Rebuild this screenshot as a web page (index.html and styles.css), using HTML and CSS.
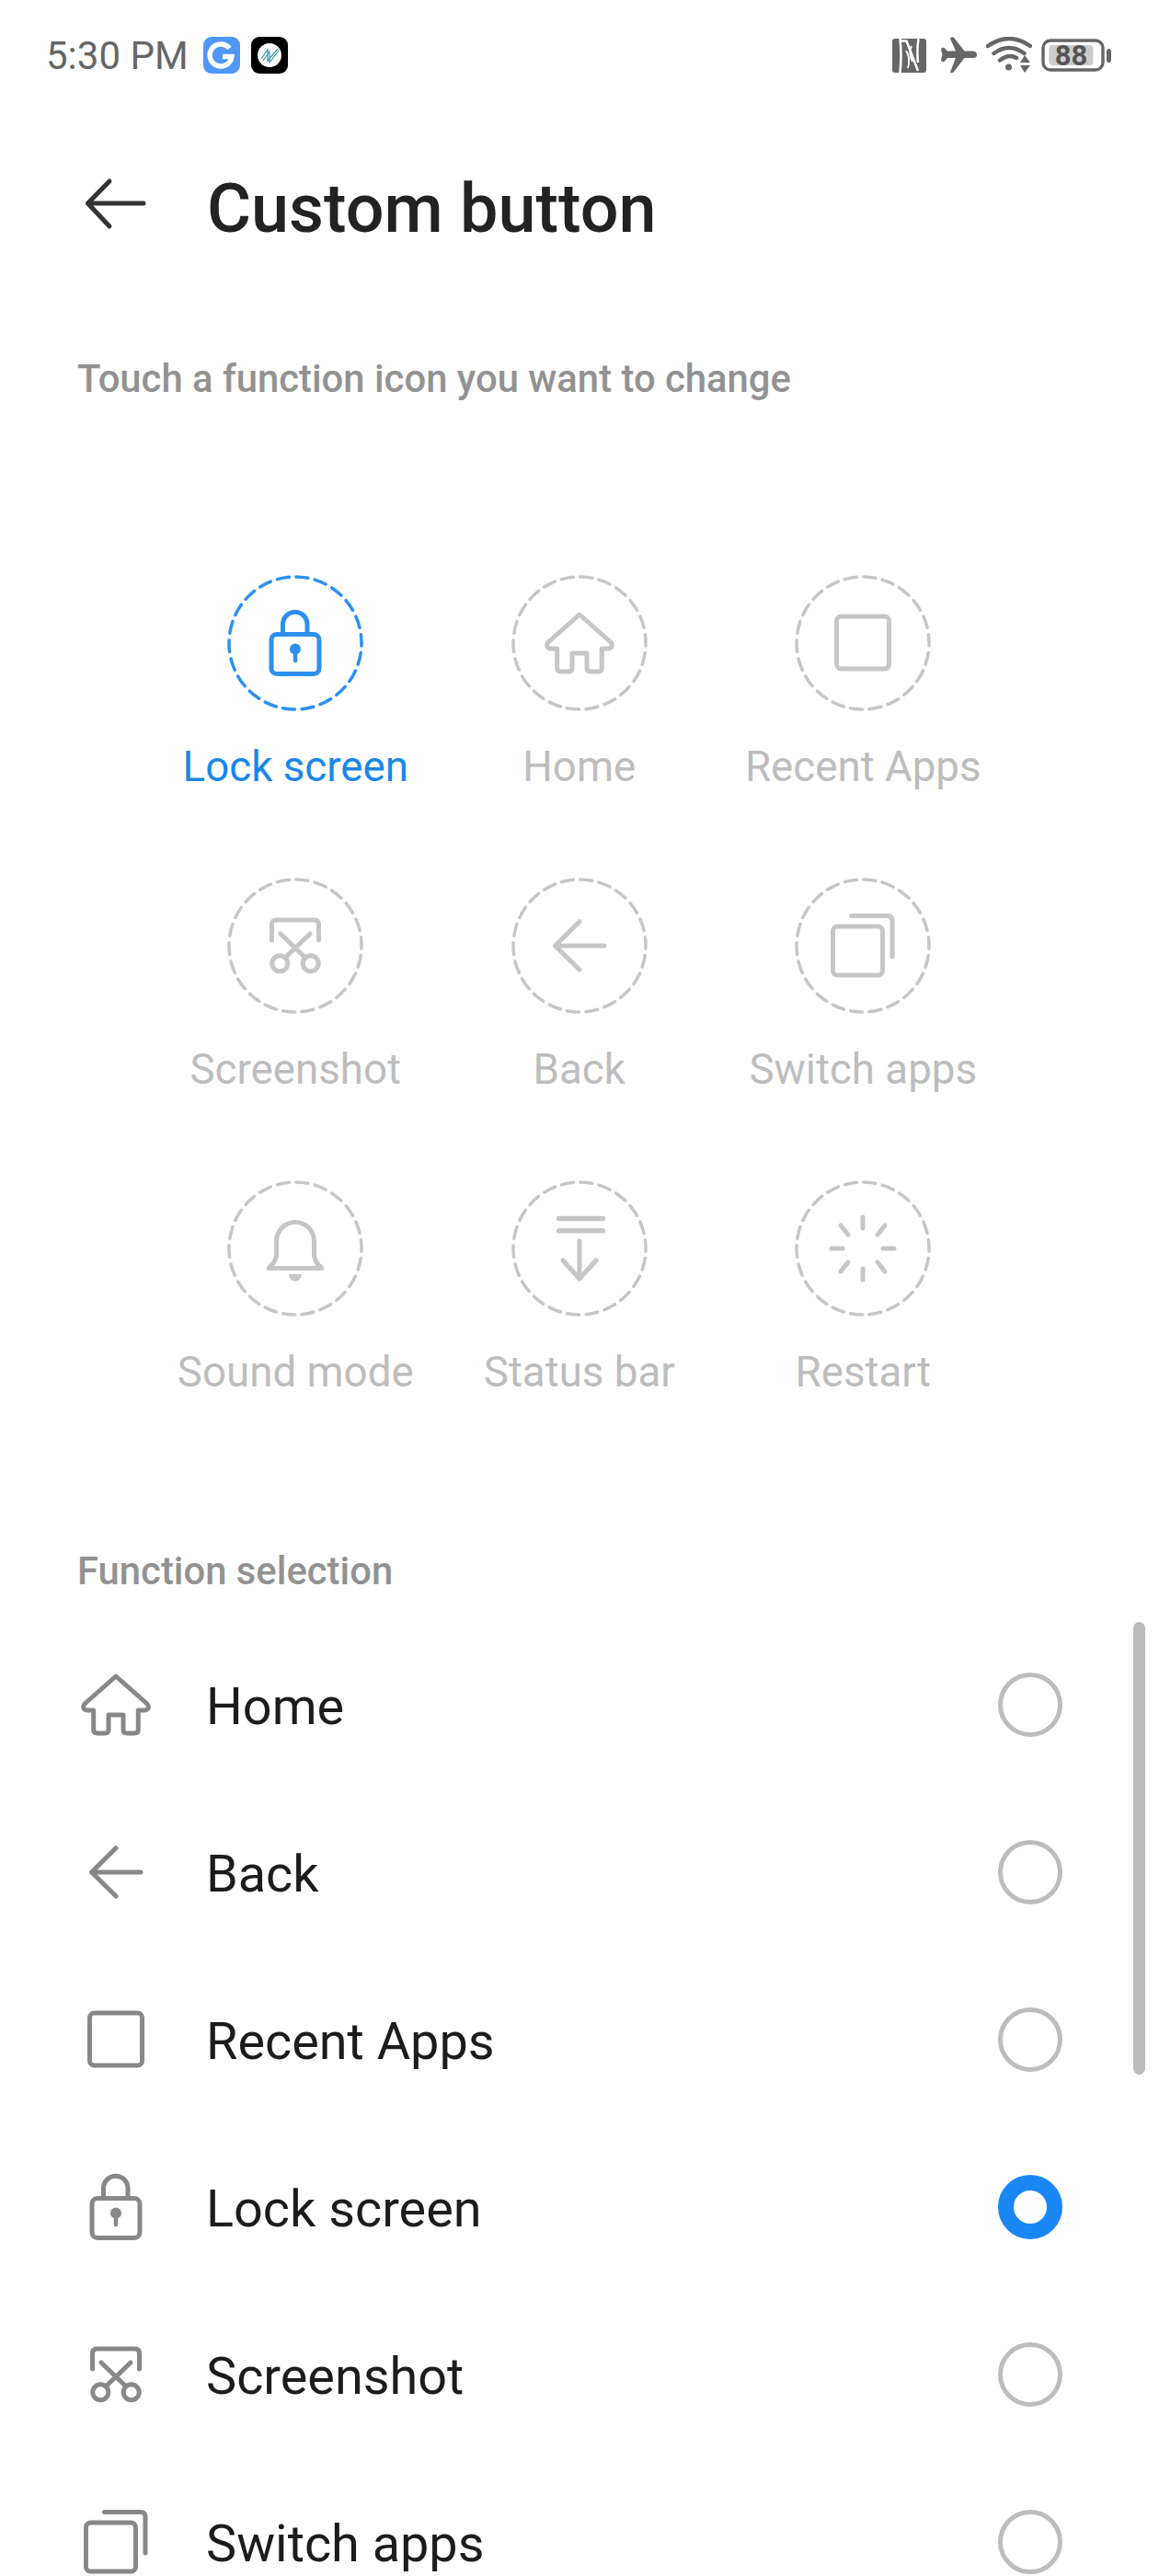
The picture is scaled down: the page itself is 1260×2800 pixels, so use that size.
FILE: index.html
```html
<!DOCTYPE html>
<html lang="en">
<head>
<meta charset="utf-8">
<title>Custom button</title>
<link rel="stylesheet" href="styles.css">
</head>
<body>
<svg class="defs" width="0" height="0" aria-hidden="true">
  <defs>
    <g id="i-home" class="line"><path d="M42 11 L8 41 Q4.500 46 10 48 H17.700 V69 Q17.700 73 22 73 H30 Q34 73 34 69 V53 H50 V69 Q50 73 54 73 H62 Q66.300 73 66.300 69 V48 H74 Q79.500 46 76 41 Z"/></g>
    <g id="i-back" class="line"><path d="M69 42 H15.500 M42 15.700 L15.500 42 L42 68"/></g>
    <g id="i-recent" class="line"><rect x="13.500" y="13" width="57" height="57" rx="5"/></g>
    <g id="i-lock" class="line"><rect x="16" y="32.500" width="52" height="43" rx="6"/><path d="M28.500 32 V21.500 A13.250 13.250 0 0 1 55 21.500 V32"/><circle class="solid nostroke" cx="42" cy="48.500" r="6"/><path class="slim" d="M42 50 V61"/></g>
    <g id="i-shot" class="line"><path d="M16.500 36 V19 Q16.500 14 21.500 14 H62.500 Q67.500 14 67.500 19 V36"/><path d="M26 29 L53 55 M58 29 L31 55"/><circle cx="25.300" cy="61.300" r="8.500"/><circle cx="58.700" cy="61.300" r="8.500"/></g>
    <g id="i-switch" class="line"><rect x="9.500" y="21" width="54" height="53" rx="5"/><path d="M29.500 9.500 H69 Q74 9.500 74 14.500 V54"/></g>
    <g id="i-bell" class="line"><path d="M13 63.500 H71 Q64 58 62.500 50 V34 A20.500 20.500 0 0 0 21.500 34 V50 Q20 58 13 63.500 Z"/><path class="solid nostroke" d="M35 70 H49 A7 7.500 0 0 1 35 70 Z"/></g>
    <g id="i-status" class="line"><path class="thick" d="M19.500 9.500 H67.500 M19.500 22.700 H67.500"/><path d="M42 34 V74 M24 55 L42 75 L60 55"/></g>
    <g id="i-restart" class="line"><path d="M42 8 V20 M42 64 V76 M8 42 H20 M64 42 H76 M18 17 L26 27 M66 17 L58 27 M18 67 L26 57 M66 67 L58 57"/></g>
  </defs>
</svg>

<div class="phone">
  <header class="status">
    <div class="status-left">
      <span class="time">5:30 PM</span>
      <svg class="app" viewBox="0 0 40 40"><rect class="g-bg" width="40" height="40" rx="9"/><path class="g-mark" d="M28.500 12.500 A12 12 0 1 0 31 21.500 H21"/></svg>
      <svg class="app" viewBox="0 0 40 40"><rect class="k-bg" width="40" height="40" rx="9"/><circle class="k-dot" cx="20" cy="20" r="13"/><path class="k-mark" d="M11 24 L18 14 L18 26 L29 13 M13 26 L20 16 L20 28 L30 15"/></svg>
    </div>
    <div class="status-right">
      <svg class="nfc" viewBox="0 0 37 37"><rect class="st" width="37" height="37" rx="3"/><path class="st-cut" d="M8.500 0 Q10.500 18 8.500 37 M10 2.500 H15.500 L28 35 M28.500 0 Q26.500 14 28 26"/><path class="st-cut-thin" d="M15 13 Q20 21 17 32 M21 8 Q17 16 22 25"/></svg>
      <svg class="plane" viewBox="0 0 40 40"><path class="st" d="M12 0.500 Q14 -0.500 15.500 1.500 L26.500 15.500 H36 Q40 16 40 19.500 Q40 23 36 23 H26.500 L15 38 Q13 40 11 38.500 L17 23 H8 L4.500 27 Q1.500 28 1 25 L2.500 19.500 L1 14 Q1.500 11 4.500 12 L8 15.500 H17 L11 2 Z"/></svg>
      <svg class="wifi" viewBox="0 0 50 40"><path class="wf" d="M2 10 Q25 -6 48 10 M8.500 18 Q25 6 41.500 18 M15 25.500 Q25 18 33 23"/><circle class="st" cx="24.500" cy="33" r="3.500"/><path class="st" d="M37 28 L42 20 L48 28 Z M37 31 H48 L42 39 Z"/></svg>
      <svg class="batt" viewBox="0 0 76 36"><rect class="batt-body" x="2" y="2" width="65" height="32" rx="8"/><rect class="batt-fill" x="8.500" y="7" width="48" height="22" rx="4"/><rect class="st" x="71" y="11" width="5" height="15" rx="2.500"/><text class="batt-text" x="32.500" y="29">88</text></svg>
    </div>
  </header>

  <div class="topbar">
    <svg class="icon title-back" viewBox="0 0 84 84"><path class="title-arrow" d="M72 38 H11.500 M35 14 L11.500 38 L35 63"/></svg>
    <h1 class="title">Custom button</h1>
  </div>

  <p class="caption caption-top">Touch a function icon you want to change</p>

  <section class="grid">
    <div class="cell active"><div class="ring"><svg class="dash" viewBox="0 0 148 148"><circle cx="74" cy="74" r="72"/></svg><svg class="icon" viewBox="0 0 84 84"><use href="#i-lock"/></svg></div><span class="cell-label">Lock screen</span></div>
    <div class="cell"><div class="ring"><svg class="dash" viewBox="0 0 148 148"><circle cx="74" cy="74" r="72"/></svg><svg class="icon" viewBox="0 0 84 84"><use href="#i-home"/></svg></div><span class="cell-label">Home</span></div>
    <div class="cell"><div class="ring"><svg class="dash" viewBox="0 0 148 148"><circle cx="74" cy="74" r="72"/></svg><svg class="icon" viewBox="0 0 84 84"><use href="#i-recent"/></svg></div><span class="cell-label">Recent Apps</span></div>
    <div class="cell"><div class="ring"><svg class="dash" viewBox="0 0 148 148"><circle cx="74" cy="74" r="72"/></svg><svg class="icon" viewBox="0 0 84 84"><use href="#i-shot"/></svg></div><span class="cell-label">Screenshot</span></div>
    <div class="cell"><div class="ring"><svg class="dash" viewBox="0 0 148 148"><circle cx="74" cy="74" r="72"/></svg><svg class="icon" viewBox="0 0 84 84"><use href="#i-back"/></svg></div><span class="cell-label">Back</span></div>
    <div class="cell"><div class="ring"><svg class="dash" viewBox="0 0 148 148"><circle cx="74" cy="74" r="72"/></svg><svg class="icon" viewBox="0 0 84 84"><use href="#i-switch"/></svg></div><span class="cell-label">Switch apps</span></div>
    <div class="cell"><div class="ring"><svg class="dash" viewBox="0 0 148 148"><circle cx="74" cy="74" r="72"/></svg><svg class="icon" viewBox="0 0 84 84"><use href="#i-bell"/></svg></div><span class="cell-label">Sound mode</span></div>
    <div class="cell"><div class="ring"><svg class="dash" viewBox="0 0 148 148"><circle cx="74" cy="74" r="72"/></svg><svg class="icon" viewBox="0 0 84 84"><use href="#i-status"/></svg></div><span class="cell-label">Status bar</span></div>
    <div class="cell"><div class="ring"><svg class="dash" viewBox="0 0 148 148"><circle cx="74" cy="74" r="72"/></svg><svg class="icon" viewBox="0 0 84 84"><use href="#i-restart"/></svg></div><span class="cell-label">Restart</span></div>
  </section>

  <p class="caption caption-section">Function selection</p>

  <section class="list">
    <div class="row"><svg class="icon" viewBox="0 0 84 84"><use href="#i-home"/></svg><span class="row-label">Home</span><span class="radio"></span></div>
    <div class="row"><svg class="icon" viewBox="0 0 84 84"><use href="#i-back"/></svg><span class="row-label">Back</span><span class="radio"></span></div>
    <div class="row"><svg class="icon" viewBox="0 0 84 84"><use href="#i-recent"/></svg><span class="row-label">Recent Apps</span><span class="radio"></span></div>
    <div class="row"><svg class="icon" viewBox="0 0 84 84"><use href="#i-lock"/></svg><span class="row-label">Lock screen</span><span class="radio on"></span></div>
    <div class="row"><svg class="icon" viewBox="0 0 84 84"><use href="#i-shot"/></svg><span class="row-label">Screenshot</span><span class="radio"></span></div>
    <div class="row"><svg class="icon" viewBox="0 0 84 84"><use href="#i-switch"/></svg><span class="row-label">Switch apps</span><span class="radio"></span></div>
  </section>

  <div class="scrollbar"></div>
</div>
</body>
</html>
```
FILE: styles.css
```css
* { box-sizing: border-box; }
html, body { margin: 0; padding: 0; background: #fff; }
body { font-family: Roboto, "Liberation Sans", sans-serif; }
.defs { position: absolute; }
.phone { position: relative; width: 1260px; height: 2800px; overflow: hidden; background: #fff; }

.status { height: 120px; padding: 0 52px 0 50px; display: flex; justify-content: space-between; align-items: center; }
.status-left { display: flex; align-items: center; }
.time { font-size: 42px; color: #666; margin-right: 16px; }
.app { width: 40px; height: 40px; margin-right: 12px; display: block; }
.g-bg { fill: #4f97f9; }
.g-mark { fill: none; stroke: #fff; stroke-width: 5.500; }
.k-bg { fill: #000; }
.k-dot { fill: #fff; }
.k-mark { fill: none; stroke: #3a96b0; stroke-width: 1.200; }
.status-right { display: flex; align-items: center; }
.st { fill: #666; }
.st-cut { fill: none; stroke: #fff; stroke-width: 2.500; }
.st-cut-thin { fill: none; stroke: #fff; stroke-width: 1.800; }
.wf { fill: none; stroke: #666; stroke-width: 4.500; stroke-linecap: round; }
.nfc { width: 37px; height: 37px; margin-right: 15px; display: block; }
.plane { width: 40px; height: 40px; margin-right: 10px; display: block; }
.wifi { width: 50px; height: 40px; margin-right: 10px; display: block; }
.batt { width: 76px; height: 36px; display: block; }
.batt-body { fill: none; stroke: #666; stroke-width: 3.400; }
.batt-fill { fill: #ccc; }
.batt-text { font-size: 31px; font-weight: 700; fill: #555; text-anchor: middle; }

.topbar { height: 210px; padding-left: 84px; display: flex; align-items: center; }
.title-back { margin-right: 57px; }
.title-arrow { fill: none; stroke: #333; stroke-width: 5; stroke-linecap: round; stroke-linejoin: round; }
.title { margin: 0; padding-top: 3px; font-size: 73.700px; font-weight: 500; color: #222; line-height: 90px; }

.caption { margin: 0; padding-left: 84px; font-size: 41.800px; font-weight: 500; color: #929292; line-height: 60px; }
.caption-top { margin-top: 52px; }
.caption-section { margin-top: 0; }

.icon { width: 84px; height: 84px; flex: none; display: block; }
.line { fill: none; stroke: currentColor; stroke-width: 5; stroke-linecap: round; stroke-linejoin: round; }
.solid { fill: currentColor; }
.nostroke { stroke: none; }
.thick { stroke-width: 5.500; }
.slim { stroke-width: 4.500; }

.grid { margin-top: 183px; padding-left: 167px; display: grid; grid-template-columns: repeat(3, 308.500px); grid-auto-rows: 329px; color: #c6c6c6; height: 1053px; }
.cell { display: flex; flex-direction: column; align-items: center; }
.ring { position: relative; width: 148px; height: 148px; flex: none; display: flex; align-items: center; justify-content: center; }
.dash { position: absolute; inset: 0; width: 148px; height: 148px; }
.dash circle { fill: none; stroke: currentColor; stroke-width: 3.500; stroke-linecap: round; stroke-dasharray: 13 7.564; stroke-dashoffset: 10; }
.cell-label { margin-top: 33px; font-size: 45.700px; line-height: 56px; color: #bdbdbd; white-space: nowrap; }
.cell.active { color: #2e90ee; }
.cell.active .cell-label { color: #1a87e8; }

.list { color: #888; margin-top: 24px; }
.row { height: 182px; padding-left: 84px; padding-right: 105px; display: flex; align-items: center; }
.row-label { margin-left: 56px; padding-top: 3px; flex: 1; font-size: 55.800px; color: #1c1c1c; line-height: 70px; }
.radio { width: 70px; height: 70px; border-radius: 50%; border: 5.500px solid #bdbdbd; flex: none; }
.radio.on { border: 17.500px solid #1a87f5; }

.scrollbar { position: absolute; left: 1232px; top: 1763px; width: 13px; height: 492px; background: #bbb; border-radius: 7px; }
```
